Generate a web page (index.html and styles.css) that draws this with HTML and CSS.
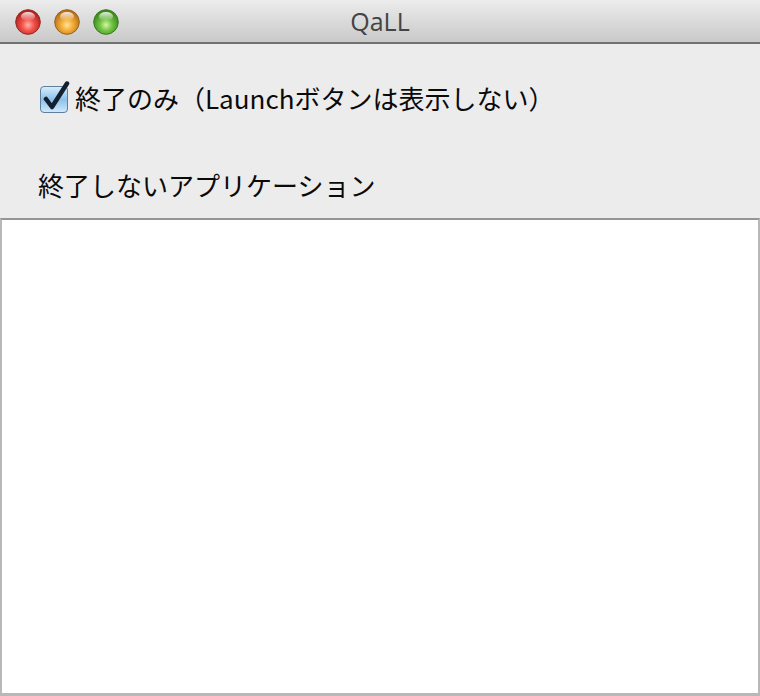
FILE: index.html
```html
<!DOCTYPE html>
<html>
<head>
<meta charset="UTF-8">
<title>QaLL</title>
<link rel="stylesheet" href="styles.css">
</head>
<body>
<div class="window">
	<div class="titlebar">
		<div class="lights">
			<svg class="light" width="26" height="26" viewBox="0 0 26 26">
				<defs>
					<radialGradient id="gRed" cx="50%" cy="62%" r="55%">
						<stop offset="0" stop-color="#ffb3a8"/>
						<stop offset="0.45" stop-color="#f2524a"/>
						<stop offset="1" stop-color="#b5231d"/>
					</radialGradient>
					<radialGradient id="gYellow" cx="50%" cy="62%" r="55%">
						<stop offset="0" stop-color="#ffe49a"/>
						<stop offset="0.45" stop-color="#f3ac36"/>
						<stop offset="1" stop-color="#b8711a"/>
					</radialGradient>
					<radialGradient id="gGreen" cx="50%" cy="62%" r="55%">
						<stop offset="0" stop-color="#d5f7a8"/>
						<stop offset="0.45" stop-color="#72c443"/>
						<stop offset="1" stop-color="#3c8a1e"/>
					</radialGradient>
					<linearGradient id="gShine" x1="0" y1="0" x2="0" y2="1">
						<stop offset="0" stop-color="#fff" stop-opacity="0.85"/>
						<stop offset="1" stop-color="#fff" stop-opacity="0"/>
					</linearGradient>
				</defs>
				<circle cx="13" cy="13" r="12.3" fill="url(#gRed)" stroke="#8e2a25" stroke-width="1"/>
				<ellipse cx="13" cy="7.5" rx="7" ry="4.5" fill="url(#gShine)"/>
			</svg>
			<svg class="light" width="26" height="26" viewBox="0 0 26 26">
				<circle cx="13" cy="13" r="12.3" fill="url(#gYellow)" stroke="#96621d" stroke-width="1"/>
				<ellipse cx="13" cy="7.5" rx="7" ry="4.5" fill="url(#gShine)"/>
			</svg>
			<svg class="light" width="26" height="26" viewBox="0 0 26 26">
				<circle cx="13" cy="13" r="12.3" fill="url(#gGreen)" stroke="#3b7a22" stroke-width="1"/>
				<ellipse cx="13" cy="7.5" rx="7" ry="4.5" fill="url(#gShine)"/>
			</svg>
		</div>
		<div class="title">QaLL</div>
	</div>
	<div class="content">
		<label class="check">
			<svg class="box" width="34" height="34" viewBox="0 0 34 34">
				<defs>
					<linearGradient id="gBox" x1="0" y1="0" x2="0" y2="1">
						<stop offset="0" stop-color="#d9eefc"/>
						<stop offset="0.5" stop-color="#8cc1ea"/>
						<stop offset="1" stop-color="#d2eafb"/>
					</linearGradient>
				</defs>
				<rect x="1.5" y="5.5" width="27" height="26" rx="3.5" fill="url(#gBox)" stroke="#5f7f9c" stroke-width="1"/>
				<path d="M7 18 L13 26 L28 2.5" fill="none" stroke="#14202e" stroke-width="4.5" stroke-linecap="round" stroke-linejoin="round"/>
			</svg>
			<span class="checktext">終了のみ（Launchボタンは表示しない）</span>
		</label>
		<div class="heading">終了しないアプリケーション</div>
	</div>
	<div class="list"></div>
</div>
</body>
</html>
```

FILE: styles.css
```css
html,
body{
	margin:0;
	padding:0;
	background:#ececec;
}
body{
	font-family:"Noto Sans CJK JP", "Noto Sans", sans-serif;
	color:#111;
}
.window{
	width:760px;
	height:696px;
	display:flex;
	flex-direction:column;
	background:#ececec;
}
.titlebar{
	height:42px;
	flex:none;
	border-bottom:2px solid #717171;
	border-radius:6px 6px 0 0;
	background:linear-gradient(#ececec, #c9c9c9);
	display:flex;
	align-items:center;
	position:relative;
}
.lights{
	display:flex;
	gap:13px;
	padding-left:15px;
	padding-top:1px;
}
.light{
	display:block;
}
.title{
	position:absolute;
	left:0;
	right:0;
	top:6px;
	text-align:center;
	font-family:"Open Sans", "DejaVu Sans", sans-serif;
	font-size:25px;
	color:#444;
	line-height:30px;
}
.content{
	padding:37px 0 16px 38px;
	flex:none;
}
.check{
	display:flex;
	align-items:center;
	gap:2px;
	height:34px;
	margin-left:1px;
}
.box{
	display:block;
}
.checktext,
.heading{
	font-size:26px;
	line-height:34px;
	color:#0a0a0a;
}
.heading{
	margin-top:53px;
}
.list{
	flex:1;
	background:#fff;
	border-top:2px solid #959595;
	border-left:2px solid #b8b8b8;
	border-right:2px solid #b8b8b8;
	border-bottom:3px solid #b8b8b8;
}
```
